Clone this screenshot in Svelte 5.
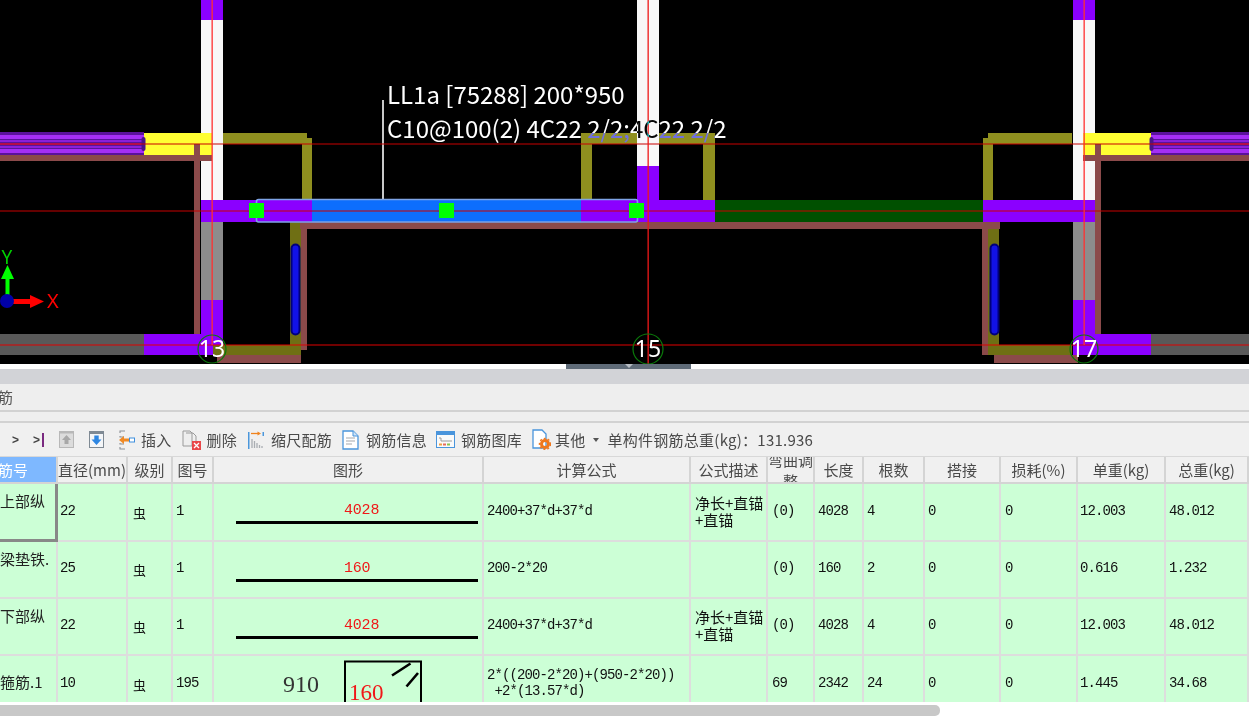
<script>
  const P = '#8b00ff', O = '#8f8f1f', D = '#6f6f14', B = '#8b4a4a', W = '#f8f8f8', G = '#8c8c8c', K = '#595959', Y = '#ffff33';
  const blocks = [
    // left wing
    [0, 334, 144, 21, K], [144, 334, 68, 21, P],
    [201, 0, 22, 20, P], [201, 20, 22, 180, W], [201, 222, 22, 78, G], [201, 300, 22, 55, P],
    [144, 133, 68, 22, Y], [194, 144, 6, 190, B], [0, 155, 212, 6, B],
    [223, 133, 84, 11, O], [302, 138, 10, 62, O],
    [201, 200, 111, 22, P],
    [295, 222, 5, 7, B], [290, 222, 11, 123, D], [301, 229, 6, 121, B],
    [213, 345, 88, 10, D], [217, 355, 84, 8, B],
    // centre
    [300, 222, 700, 7, B],
    [312, 200, 269, 22, '#0d6efd'], [581, 200, 56, 22, P],
    [581, 133, 134, 11, O], [581, 144, 11, 56, O], [703, 144, 12, 56, O],
    [637, 0, 22, 166, W], [637, 166, 22, 56, P], [659, 200, 56, 22, P],
    [715, 200, 268, 22, '#005000'],
    // right wing
    [988, 133, 84, 11, O], [983, 138, 10, 62, O],
    [983, 200, 112, 22, P],
    [982, 229, 6, 126, B], [988, 229, 11, 116, D],
    [988, 345, 84, 10, D], [994, 355, 84, 8, B],
    [1073, 0, 22, 20, P], [1073, 20, 22, 180, W], [1073, 222, 22, 78, G], [1073, 300, 22, 55, P],
    [1095, 334, 56, 21, P], [1151, 334, 98, 21, K],
    [1083, 133, 68, 22, Y], [1095, 144, 6, 190, B], [1083, 155, 166, 6, B]
  ];
  const stripes = [
    [0, 144], [1151, 98]
  ];
  const axes = [[212, 14], [648, 15], [1084, 14]];
  const labels = ['13', '15', '17'];
  const widths = [58, 70, 45, 41, 270, 207, 77, 47, 49, 61, 76, 77, 88, 83];
  const heads = ['筋号', '直径(mm)', '级别', '图号', '图形', '计算公式', '公式描述', '弯曲调整', '长度', '根数', '搭接', '损耗(%)', '单重(kg)', '总重(kg)'];
  const rows = [
    { name: '上部纵', d: '22', fig: '1', shape: '4028', f: ['2400+37*d+37*d'], desc: '净长+直锚 +直锚', adj: '(0)', len: '4028', n: '4', unit: '12.003', total: '48.012', h: 58 },
    { name: '梁垫铁.', d: '25', fig: '1', shape: '160', f: ['200-2*20'], desc: '', adj: '(0)', len: '160', n: '2', unit: '0.616', total: '1.232', h: 57 },
    { name: '下部纵', d: '22', fig: '1', shape: '4028', f: ['2400+37*d+37*d'], desc: '净长+直锚 +直锚', adj: '(0)', len: '4028', n: '4', unit: '12.003', total: '48.012', h: 57 },
    { name: '箍筋.1', d: '10', fig: '195', shape: '', f: ['2*((200-2*20)+(950-2*20))', ' +2*(13.57*d)'], desc: '', adj: '69', len: '2342', n: '24', unit: '1.445', total: '34.68', h: 58 }
  ];
</script>

<div class="page">
  <svg class="canvas" width="1249" height="364" viewBox="0 0 1249 364">
    <rect width="1249" height="364" fill="#000" />
    {#each stripes as s}
      <rect x={s[0]} y="132" width={s[1]} height="23" fill="#5a129c" />
      <rect x={s[0]} y="135" width={s[1]} height="4" fill="#a52ff5" />
      <rect x={s[0]} y="140" width={s[1]} height="2" fill="#8a1fd8" />
      <rect x={s[0]} y="143" width={s[1]} height="2" fill="#a01c8c" />
      <rect x={s[0]} y="146" width={s[1]} height="2" fill="#8a1fd8" />
      <rect x={s[0]} y="149" width={s[1]} height="4" fill="#a52ff5" />
    {/each}
    {#each blocks as b}
      <rect x={b[0]} y={b[1]} width={b[2]} height={b[3]} fill={b[4]} />
    {/each}
    <rect x="141.500" y="137" width="4" height="14" rx="2" fill="#4a1488" />
    <rect x="1149.500" y="137" width="4" height="14" rx="2" fill="#4a1488" />

    <rect x="291.500" y="244.500" width="8" height="90" rx="4" fill="#1212e6" stroke="#00007a" stroke-width="2" />
    <rect x="990.500" y="244.500" width="8" height="90" rx="4" fill="#1212e6" stroke="#00007a" stroke-width="2" />

    <rect x="382" y="100" width="2" height="100" fill="#c8c8c8" />
    <rect x="256.500" y="199.500" width="381" height="22.500" rx="2" fill="none" stroke="#7ea4e6" stroke-width="1.600" />

    <rect x="0" y="143.500" width="1249" height="1" fill="#c80000" />
    <rect x="0" y="210.500" width="1249" height="1" fill="#c80000" />
    <rect x="0" y="344.500" width="1249" height="1" fill="#e00000" />
    <rect x="211.500" y="0" width="1.300" height="345" fill="#ff3030" />
    <rect x="647.500" y="0" width="1.300" height="364" fill="#ee1818" />
    <rect x="1083.500" y="0" width="1.300" height="345" fill="#ff3030" />

    <rect x="249" y="203" width="15" height="15" fill="#00ff00" />
    <rect x="439" y="203" width="15" height="15" fill="#00ff00" />
    <rect x="629" y="203" width="15" height="15" fill="#00ff00" />

    <text class="note" x="387" y="104">LL1a [75288] 200*950</text>
    <text class="note" x="387" y="138">C10@100(2) 4C22 2/2;4C22 2/2</text>

    {#each axes as a, i}
      <circle cx={a[0]} cy="349" r={a[1]} fill="none" stroke="#0a7a0a" stroke-width="1.200" />
      <text class="axis" x={a[0]} y="357">{labels[i]}</text>
    {/each}

    <rect x="5.500" y="275" width="4" height="22" fill="#00ff00" />
    <path d="M7.500 265 L14 279 H1 Z" fill="#00ff00" />
    <rect x="13" y="299" width="18" height="5" fill="#ff0000" />
    <path d="M44 301.500 L30 295 V308 Z" fill="#ff0000" />
    <circle cx="7" cy="301" r="7" fill="#0000a8" />
    <text class="ay" x="7" y="264">Y</text>
    <text class="ax" x="47" y="308">X</text>
  </svg>

  <div class="splitter"><div class="grip"><span class="tri"></span></div></div>
  <div class="band"></div>
  <div class="title"><span>筋</span></div>
  <div class="sliver"></div>

  <div class="toolbar">
    <span class="nav">&gt;</span>
    <span class="nav end">&gt;<i></i></span>
    <svg class="i up" width="15" height="17" viewBox="0 0 15 17">
      <rect x="0.500" y="0.500" width="14" height="16" fill="#dcdcdc" stroke="#b8b8b8" />
      <rect x="0" y="0" width="15" height="2.500" fill="#b8b8b8" />
      <path d="M7.500 4 L12 9 H9.500 V13 H5.500 V9 H3 Z" fill="#a8a8a8" />
    </svg>
    <svg class="i down" width="15" height="17" viewBox="0 0 15 17">
      <rect x="0.500" y="0.500" width="14" height="16" fill="#f4f6f8" stroke="#7f8a94" />
      <rect x="0" y="0" width="15" height="3" fill="#7f8a94" />
      <path d="M7.500 14 L12.500 8.500 H9.700 V4.500 H5.300 V8.500 H2.500 Z" fill="#2d86e2" />
    </svg>
    <div class="tool ins">
      <svg width="16" height="20" viewBox="0 0 16 20">
        <path d="M1 3V1H6M1 17V19H6M1 6V7H5M1 13V14H5" fill="none" stroke="#8a8f95" stroke-width="1.100" />
        <path d="M0 10 L5 6 V8.500 H10 V11.500 H5 V14 Z" fill="#f08a24" />
        <rect x="10.500" y="8" width="5" height="4" fill="#fff" stroke="#3f8fdd" />
      </svg>
      <span>插入</span>
    </div>
    <div class="tool del">
      <svg width="20" height="20" viewBox="0 0 20 20">
        <path d="M1 1H8L10 3V16H1Z" fill="#eee" stroke="#9a9a9a" />
        <path d="M4 3H11L14 6V12" fill="none" stroke="#9a9a9a" />
        <rect x="10" y="11" width="9" height="9" fill="#e9474a" />
        <path d="M12 13L17 18M17 13L12 18" stroke="#fff" stroke-width="1.300" />
      </svg>
      <span>删除</span>
    </div>
    <div class="tool sca">
      <svg width="16" height="18" viewBox="0 0 16 18">
        <rect x="0" y="1" width="1.500" height="17" fill="#4b97dc" />
        <rect x="14.500" y="1" width="1.500" height="4" fill="#4b97dc" />
        <path d="M3 2.500H11" stroke="#f0831e" stroke-width="1.300" />
        <path d="M9.500 0.500L13 2.500L9.500 4.500Z" fill="#f0831e" />
        <path d="M4 8V17M6.500 10V17M9 12V17M11.500 14V17M14 15V17" stroke="#a9adb2" stroke-width="1.300" />
      </svg>
      <span>缩尺配筋</span>
    </div>
    <div class="tool doc">
      <svg width="17" height="20" viewBox="0 0 17 20">
        <path d="M1 1H11L16 6V19H1Z" fill="#fff" stroke="#4a95dc" stroke-width="1.300" />
        <path d="M11 1V6H16" fill="#cfe4f7" stroke="#4a95dc" />
        <path d="M4 8H13M4 11H13M4 14H10" stroke="#a5a8ac" stroke-width="1.100" />
      </svg>
      <span>钢筋信息</span>
    </div>
    <div class="tool lib">
      <svg width="19" height="17" viewBox="0 0 19 17">
        <rect x="0.500" y="0.500" width="18" height="16" fill="#fafafa" stroke="#4a95dc" />
        <rect x="0" y="0" width="19" height="4" fill="#4a95dc" />
        <path d="M3 7H5V10H16" fill="none" stroke="#9c9c9c" />
        <rect x="3" y="12.500" width="3" height="2" fill="#f0a040" />
        <rect x="7" y="12.500" width="3" height="2" fill="#e86a5c" />
        <rect x="11" y="12.500" width="3" height="2" fill="#8bc34a" />
      </svg>
      <span>钢筋图库</span>
    </div>
    <div class="tool oth">
      <svg width="19" height="21" viewBox="0 0 19 21">
        <path d="M1 1H10L14 5V19H1Z" fill="#fff" stroke="#4a95dc" stroke-width="1.300" />
        <circle cx="13" cy="15" r="3.500" fill="none" stroke="#f0781e" stroke-width="3" />
        <circle cx="13" cy="15" r="5.500" fill="none" stroke="#f0781e" stroke-width="1.500" stroke-dasharray="2 2" />
      </svg>
      <span>其他</span>
    </div>
    <span class="caret"></span>
    <span class="sum">单构件钢筋总重(kg)：131.936</span>
  </div>

  <div class="grid">
    <table>
      <colgroup>
        {#each widths as w}<col style="width:{w}px" />{/each}
      </colgroup>
      <thead>
        <tr>
          {#each heads as h, i}
            <th class:act={i === 0}><div>{h}</div></th>
          {/each}
        </tr>
      </thead>
      <tbody>
        {#each rows as r, ri}
          <tr style="height:{r.h}px">
            <td class="nm" class:sel={ri === 0} class:low={ri === 3}><div>{r.name}</div></td>
            <td class="p3">{r.d}</td>
            <td class="gr">虫</td>
            <td class="p4">{r.fig}</td>
            <td class="sh">
              {#if r.shape}
                <div class="lbl">{r.shape}</div>
                <div class="bar"></div>
              {:else}
                <svg class="hoop" width="268" height="46" viewBox="0 0 268 46">
                  <text class="t910" x="69" y="36">910</text>
                  <path d="M131 46V5.500H207V46" fill="none" stroke="#000" stroke-width="2" />
                  <path d="M178 19.500L196.500 7.500M192.500 30.500L204 17" fill="none" stroke="#000" stroke-width="2.600" />
                  <text class="t160" x="135" y="44">160</text>
                </svg>
              {/if}
            </td>
            <td class="fm">{#each r.f as l}<div>{l}</div>{/each}</td>
            <td class="ds">{r.desc}</td>
            <td class="p5">{r.adj}</td>
            <td class="p4">{r.len}</td>
            <td class="p4">{r.n}</td>
            <td class="p4">0</td>
            <td class="p5">0</td>
            <td class="p3">{r.unit}</td>
            <td class="p4">{r.total}</td>
          </tr>
        {/each}
      </tbody>
    </table>
  </div>

  <div class="scroll"><div class="thumb"></div></div>
</div>

<style>
  :global(body) { margin: 0; background: #fff; }
  .page { width: 1249px; height: 719px; overflow: hidden; font-family: "Noto Sans CJK SC", "Noto Sans", sans-serif; color: #444; filter: blur(0.35px); }
  .canvas { display: block; }
  .note { font-family: "Noto Sans CJK SC", "Noto Sans", sans-serif; font-size: 24px; fill: #fff; mix-blend-mode: difference; }
  .axis { font-family: "Noto Sans", sans-serif; font-size: 23px; fill: #fff; text-anchor: middle; }
  .ay { font-family: "Noto Sans", sans-serif; font-size: 19px; fill: #00d000; text-anchor: middle; }
  .ax { font-family: "Noto Sans", sans-serif; font-size: 20px; fill: #ff0000; }

  .splitter { height: 5px; background: #fff; display: flex; justify-content: flex-start; }
  .grip { width: 125px; height: 5px; margin-left: 566px; background: #5f6b78; display: flex; justify-content: center; }
  .tri { width: 0; height: 0; border-left: 4px solid transparent; border-right: 4px solid transparent; border-top: 4px solid #b6bcc3; }
  .band { height: 15px; background: #d2d3d7; }
  .title { height: 26px; background: #eeeeee; font-size: 15px; line-height: 26px; color: #555; overflow: hidden; }
  .title span { display: block; margin-left: -2px; }
  .sliver { height: 9px; background: #efefef; border-top: 2px solid #d2d2d2; border-bottom: 2px solid #d2d2d2; }

  .toolbar { height: 34px; box-sizing: border-box; background: #f0f0f0; border-bottom: 1px solid #d8d8d8; display: flex; align-items: center; padding-left: 12px; font-size: 15px; letter-spacing: 0.25px; color: #4a4a4a; white-space: nowrap; }
  .nav { font-family: "Liberation Sans", sans-serif; font-size: 12px; font-weight: bold; color: #444; width: 21px; }
  .nav.end { width: 26px; display: flex; align-items: center; }
  .nav.end i { display: block; width: 1.500px; height: 14px; margin-left: 2px; background: #7a2a80; }
  .i { flex: none; }
  .up { margin-right: 15px; }
  .down { margin-right: 15px; }
  .tool { display: flex; align-items: center; gap: 6px; margin-right: 10px; }
  .tool svg { flex: none; }
  .del { gap: 5px; margin-right: 11px; }
  .sca { gap: 7px; }
  .doc { gap: 7px; margin-right: 9px; }
  .oth { gap: 4px; margin-right: 7px; }
  .caret { width: 0; height: 0; border-left: 3.500px solid transparent; border-right: 3.500px solid transparent; border-top: 4px solid #555; margin-right: 9px; }

  .grid { height: 245px; overflow: hidden; background: #ccffd6; }
  table { width: 1249px; table-layout: fixed; border-collapse: separate; border-spacing: 0; }
  th { height: 27px; padding: 0; box-sizing: border-box; background: #f0f0f0; border-right: 2px solid #d4d4d4; border-bottom: 2px solid #d4d4d4; font-weight: normal; font-size: 15px; color: #4a4a4a; }
  th div { height: 25px; display: flex; align-items: center; justify-content: center; overflow: hidden; line-height: 21px; text-align: center; }
  th.act { background: #7eb8ff; color: #fff; }
  th.act div { justify-content: flex-start; margin-left: -2px; }
  td { padding: 0 0 3px 0; box-sizing: border-box; background: #ccffd6; border-right: 2px solid #dddddd; border-bottom: 2px solid #dddddd; font-family: "Liberation Mono", monospace; font-size: 14px; letter-spacing: -0.9px; color: #111; overflow: hidden; }
  .p3 { padding-left: 2px; }
  .p4 { padding-left: 3px; }
  .p5 { padding-left: 4px; }
  .gr { padding-left: 5px; font-family: "Noto Sans CJK SC", sans-serif; font-size: 13px; letter-spacing: 0; padding-top: 3px; }
  .nm { vertical-align: top; padding: 8px 0 0 0; font-family: "Noto Sans CJK SC", sans-serif; font-size: 15px; letter-spacing: 0; line-height: 18px; color: #222; white-space: nowrap; }
  .nm.low { padding-top: 17px; }
  .nm.sel { border-right: 3px solid #888; border-bottom: 3px solid #888; }
  .sh { padding: 0; vertical-align: top; }
  .lbl { margin: 19px 0 0 130px; height: 16px; line-height: 16px; color: #f01818; font-size: 15px; letter-spacing: -0.2px; }
  .bar { margin: 2px 0 0 22px; width: 242px; height: 2.500px; background: #000; }
  .hoop { display: block; }
  .t910 { font-family: "Liberation Serif", serif; font-size: 24px; letter-spacing: 0; fill: #333; }
  .t160 { font-family: "Liberation Serif", serif; font-size: 23px; letter-spacing: 0; fill: #f01818; }
  .fm { padding-left: 3px; line-height: 16px; }
  .fm div { white-space: pre; }
  .ds { padding: 0 0 3px 4px; font-family: "Noto Sans CJK SC", sans-serif; font-size: 15px; letter-spacing: 0; line-height: 17px; word-break: break-all; }

  .scroll { height: 17px; box-sizing: border-box; padding-top: 3px; background: #fff; }
  .thumb { width: 940px; height: 11px; border-radius: 0 5px 5px 0; background: #c8c8c8; }
</style>
